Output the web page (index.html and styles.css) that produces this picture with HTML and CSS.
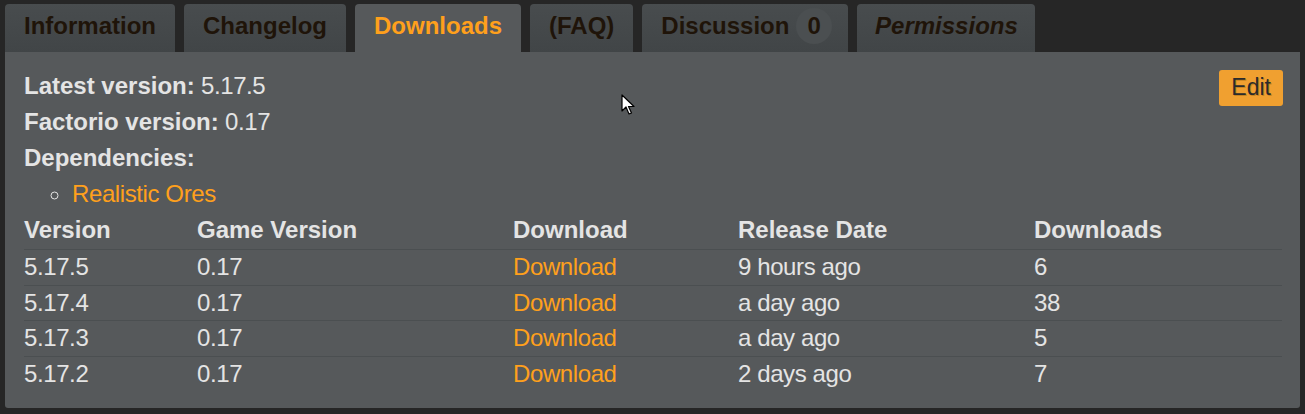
FILE: index.html
```html
<!DOCTYPE html>
<html lang="en">
<head>
    <meta charset="UTF-8">
    <meta name="viewport" content="width=device-width, initial-scale=1.0">
    <title>Realistic Ores - Downloads</title>
    <link rel="stylesheet" href="styles.css">
</head>
<body>
    <div class="tabs">
        <a class="tab" href="#">Information</a>
        <a class="tab" href="#">Changelog</a>
        <a class="tab active" href="#">Downloads</a>
        <a class="tab" href="#">(FAQ)</a>
        <a class="tab" href="#">Discussion <span class="badge">0</span></a>
        <a class="tab italic" href="#">Permissions</a>
    </div>

    <div class="panel">
        <a class="edit-btn" href="#">Edit</a>
        <div class="info"><b>Latest version:</b> 5.17.5</div>
        <div class="info"><b>Factorio version:</b> 0.17</div>
        <div class="info"><b>Dependencies:</b></div>
        <ul class="deps">
            <li><a href="#">Realistic Ores</a></li>
        </ul>

        <table class="releases">
            <colgroup>
                <col style="width: 173px">
                <col style="width: 316px">
                <col style="width: 225px">
                <col style="width: 296px">
                <col>
            </colgroup>
            <thead>
                <tr>
                    <th>Version</th>
                    <th>Game Version</th>
                    <th>Download</th>
                    <th>Release Date</th>
                    <th>Downloads</th>
                </tr>
            </thead>
            <tbody>
                <tr><td>5.17.5</td><td>0.17</td><td><a href="#">Download</a></td><td>9 hours ago</td><td>6</td></tr>
                <tr><td>5.17.4</td><td>0.17</td><td><a href="#">Download</a></td><td>a day ago</td><td>38</td></tr>
                <tr><td>5.17.3</td><td>0.17</td><td><a href="#">Download</a></td><td>a day ago</td><td>5</td></tr>
                <tr><td>5.17.2</td><td>0.17</td><td><a href="#">Download</a></td><td>2 days ago</td><td>7</td></tr>
            </tbody>
        </table>

        <!-- mouse pointer from the screenshot -->
        <svg class="cursor" width="14" height="22" viewBox="0 0 14 22">
            <path d="M1 1 L1 17 L5 13 L8 20 L10.5 19 L7.5 12.5 L13 12.5 Z" fill="#fff" stroke="#000" stroke-width="1.2" stroke-linejoin="round"/>
        </svg>
    </div>
</body>
</html>
```

FILE: styles.css
```css
body {
    font-family: "Liberation Sans", Arial, sans-serif;
    font-size: 24px;
    margin: 0;
    padding: 4px 5px 0;
    background-color: #262626;
    color: #e4e4e4;
    letter-spacing: -0.4px;
}

b, th, .tab {
    letter-spacing: 0;
}

a {
    color: #ffa01c;
    text-decoration: none;
}

.tabs {
    display: flex;
    gap: 9px;
}

.tab {
    display: block;
    height: 48px;
    padding: 0 19px;
    box-sizing: border-box;
    line-height: 44px;
    font-weight: bold;
    color: #1f1409;
    background: linear-gradient(#484c4e, #414547);
    border-radius: 4px 4px 0 0;
}

.tab.active {
    color: #ffa01c;
    background: #56595b;
}

.tab.italic {
    font-style: italic;
    padding: 0 17px 0 18px;
}

.badge {
    display: inline-block;
    width: 36px;
    height: 36px;
    margin-right: -3px;
    line-height: 36px;
    text-align: center;
    border-radius: 50%;
    background-color: #4b4f51;
}

.panel {
    position: relative;
    background-color: #56595b;
    padding: 16px 18px 17px 19px;
    border-radius: 0 0 3px 3px;
}

.edit-btn {
    float: right;
    margin-top: 2px;
    margin-right: -1px;
    height: 36px;
    padding: 0 12px;
    line-height: 34px;
    font-size: 23px;
    letter-spacing: 0;
    color: #2b2b2b;
    text-shadow: 1px 1px 0 #c88420;
    background-color: #f0a030;
    border-radius: 3px;
}

.info {
    line-height: 36px;
}

.deps {
    margin: 0;
    padding-left: 48px;
    line-height: 36px;
    list-style: circle;
}

.releases {
    width: 100%;
    border-collapse: collapse;
    table-layout: fixed;
}

.releases th {
    text-align: left;
    line-height: 36px;
    padding: 0 0 1px;
}

.releases td {
    padding: 0;
    line-height: 34.5px;
    border-top: 1px solid #4b4f51;
}

.cursor {
    position: absolute;
    left: 616px;
    top: 42px;
}
```
